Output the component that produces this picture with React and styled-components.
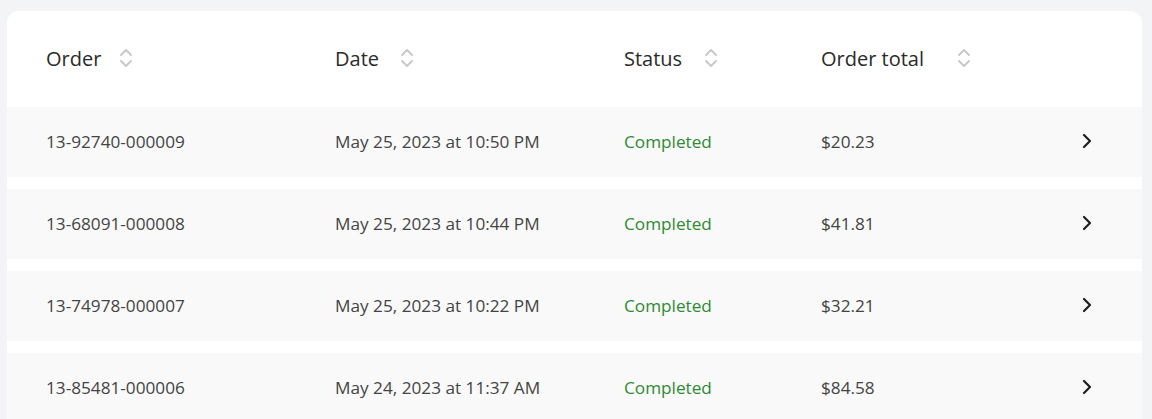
import React from 'react';
import styled, { createGlobalStyle } from 'styled-components';

const GlobalStyle = createGlobalStyle`
  *, *:before, *:after { box-sizing: border-box; }
  body {
    margin: 0;
    background: #f3f4f6;
    font-family: 'Open Sans', 'Noto Sans', sans-serif;
    color: #333;
  }
`;

const Page = styled.div`
  padding: 11px 10px 0 7px;
  height: 419px;
  overflow: hidden;
`;

const Card = styled.div`
  background: #fff;
  border-radius: 12px 12px 0 0;
  display: flex;
  flex-direction: column;
  gap: 12px;
`;

const Row = styled.div`
  display: grid;
  grid-template-columns: 289px 289px 197px 1fr 24px;
  align-items: center;
  padding: 0 37px 2px 39px;
  height: ${p => (p.head ? '96px' : '70px')};
  background: ${p => (p.head ? 'transparent' : '#f9f9f9')};
  margin-bottom: ${p => (p.head ? '-12px' : '0')};
`;

const HeadCell = styled.div`
  display: flex;
  align-items: center;
  gap: ${p => p.gap}px;
  font-size: 20px;
  color: #2a2a2a;
`;

const Cell = styled.div`
  font-size: 17.2px;
  color: ${p => (p.status ? '#2e8a33' : '#444')};
`;

const SortIcon = () => (
  <svg width="16" height="20" viewBox="0 0 16 20" fill="none" stroke="#c8c8c8" strokeWidth="2" strokeLinecap="round" strokeLinejoin="round">
    <path d="M3 7l5-5 5 5" />
    <path d="M3 13l5 5 5-5" />
  </svg>
);

const Chevron = () => (
  <svg width="12" height="18" viewBox="0 0 12 18" fill="none" stroke="#1e1e1e" strokeWidth="2.2" strokeLinecap="round" strokeLinejoin="round">
    <path d="M3 3l6 6-6 6" />
  </svg>
);

const columns = [
  { label: 'Order', gap: 17 },
  { label: 'Date', gap: 20 },
  { label: 'Status', gap: 21 },
  { label: 'Order total', gap: 32 },
];

const orders = [
  { id: '13-92740-000009', date: 'May 25, 2023 at 10:50 PM', total: '$20.23' },
  { id: '13-68091-000008', date: 'May 25, 2023 at 10:44 PM', total: '$41.81' },
  { id: '13-74978-000007', date: 'May 25, 2023 at 10:22 PM', total: '$32.21' },
  { id: '13-85481-000006', date: 'May 24, 2023 at 11:37 AM', total: '$84.58' },
];

export default function App() {
  return (
    <Page>
      <GlobalStyle />
      <Card>
        <Row head>
          {columns.map(c => (
            <HeadCell key={c.label} gap={c.gap}>
              {c.label} <SortIcon />
            </HeadCell>
          ))}
          <div />
        </Row>
        {orders.map(o => (
          <Row key={o.id}>
            <Cell>{o.id}</Cell>
            <Cell>{o.date}</Cell>
            <Cell status>Completed</Cell>
            <Cell>{o.total}</Cell>
            <Chevron />
          </Row>
        ))}
      </Card>
    </Page>
  );
}
